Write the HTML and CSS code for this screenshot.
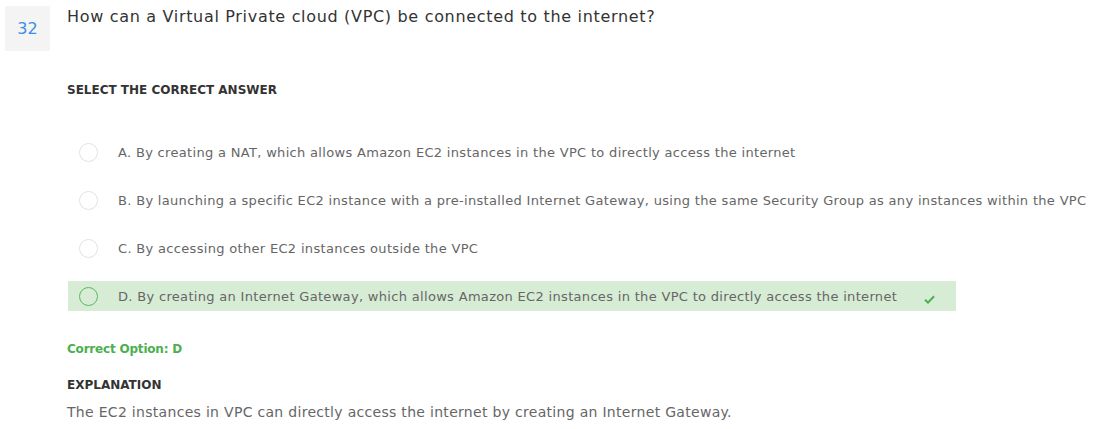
FILE: index.html
```html
<!DOCTYPE html>
<html>
<head>
<meta charset="utf-8">
<link rel="stylesheet" href="styles.css">
</head>
<body>
<div class="question">
  <div class="qnum">32</div>
  <div class="qbody">
    <div class="qtext">How can a Virtual Private cloud (VPC) be connected to the internet?</div>
    <div class="label select-label">SELECT THE CORRECT ANSWER</div>
    <ul class="options">
      <li class="option"><span class="radio"></span><span class="otext">A. By creating a NAT, which allows Amazon EC2 instances in the VPC to directly access the internet</span></li>
      <li class="option"><span class="radio"></span><span class="otext">B. By launching a specific EC2 instance with a pre-installed Internet Gateway, using the same Security Group as any instances within the VPC</span></li>
      <li class="option"><span class="radio"></span><span class="otext">C. By accessing other EC2 instances outside the VPC</span></li>
      <li class="option correct"><span class="radio"></span><span class="otext">D. By creating an Internet Gateway, which allows Amazon EC2 instances in the VPC to directly access the internet</span>
        <svg class="check" width="11" height="9" viewBox="0 0 11 9"><path d="M1 4.8 L4 7.6 L10 1.2" fill="none" stroke="#4caf50" stroke-width="2"/></svg>
      </li>
    </ul>
    <div class="correct-option">Correct Option: D</div>
    <div class="label explain-label">EXPLANATION</div>
    <div class="explain">The EC2 instances in VPC can directly access the internet by creating an Internet Gateway.</div>
  </div>
</div>
</body>
</html>
```
FILE: styles.css
```css
* { box-sizing: border-box; }
body {
  margin: 0;
  font-family: "DejaVu Sans", sans-serif;
  color: #333;
  background: #fff;
}
.question {
  display: flex;
  padding: 6px 0 0 5px;
}
.qnum {
  width: 45px;
  height: 45px;
  background: #f4f4f4;
  color: #3a8ee6;
  font-size: 16px;
  display: flex;
  align-items: center;
  justify-content: center;
  flex-shrink: 0;
}
.qbody {
  margin-left: 17px;
  flex: 1;
}
.qtext {
  font-size: 16px;
  line-height: 22px;
  letter-spacing: 0.68px;
  color: #333;
  margin-top: 0;
}
.label {
  font-size: 12px;
  font-weight: 700;
  color: #333;
}
.select-label {
  margin-top: 55px;
}
.options {
  list-style: none;
  margin: 40px 0 0 0;
  padding: 0;
}
.option {
  display: flex;
  align-items: center;
  height: 30px;
  width: 888px;
  margin-left: 1px;
  margin-bottom: 18px;
  padding-left: 11px;
  font-size: 13px;
  letter-spacing: 0.32px;
  color: #666;
  white-space: nowrap;
}
.radio {
  width: 19px;
  height: 19px;
  border: 1px solid #e2e2e2;
  border-radius: 50%;
  background: #fff;
  flex-shrink: 0;
  margin-right: 20px;
}
.option.correct {
  background: #d7ecd5;
}
.option.correct .radio {
  border-color: #5cb85c;
  background: transparent;
}
.check {
  margin-left: 27px;
  margin-top: 6px;
}
.correct-option {
  margin-top: 31px;
  color: #4caf50;
  font-size: 12px;
  letter-spacing: -0.2px;
  font-weight: 700;
}
.explain-label {
  margin-top: 22px;
}
.explain {
  margin-top: 12px;
  font-size: 14px;
  letter-spacing: 0.3px;
  color: #666;
}
```
